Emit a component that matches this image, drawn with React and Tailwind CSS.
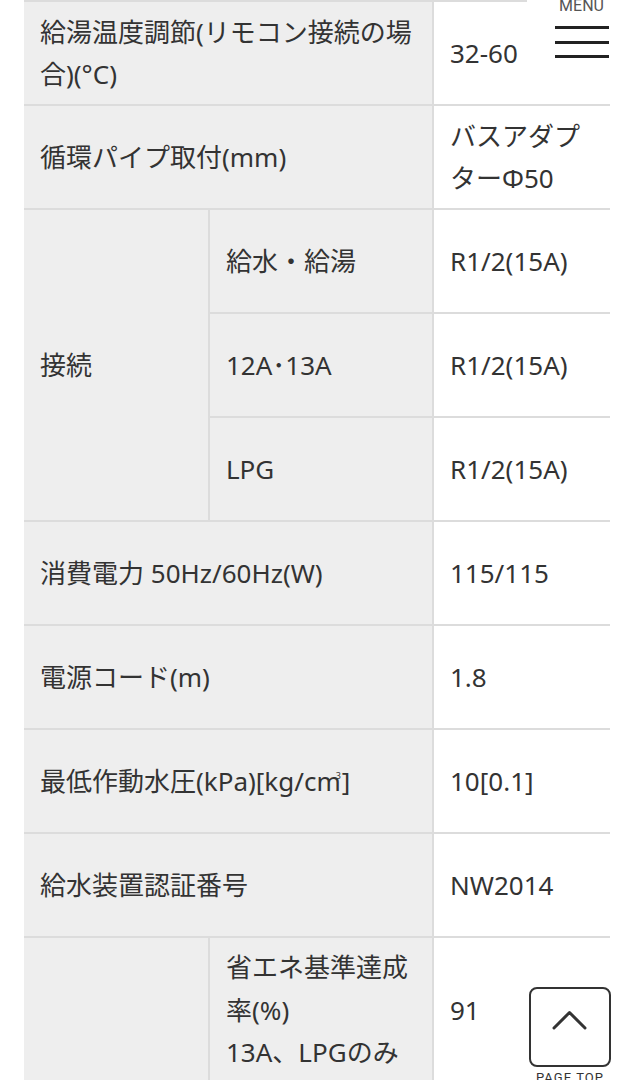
import React from "react";

const label = "bg-[#eeeeee] flex items-center px-4 py-2 min-h-[102px]";
const value = "bg-white flex items-center pl-4 pr-4 py-2 min-h-[102px]";

export default function App() {
  return (
    <div className="relative w-full h-[1080px] overflow-hidden bg-white text-[#333333] font-['Noto_Sans','Noto_Sans_CJK_JP',sans-serif] text-[26px] leading-[42.5px]">
      <div className="ml-[24px] w-[586px] border-t-2 border-[#dcdcdc] bg-[#dcdcdc] grid grid-cols-[184px_222px_176px] gap-[2px]">
        <div className={`${label} col-span-2`}>
          <span>給湯温度調節(リモコン接続の場合)(°C)</span>
        </div>
        <div className={value}>32-60</div>

        <div className={`${label} col-span-2`}>循環パイプ取付(mm)</div>
        <div className={value}>
          <span>バスアダプターΦ50</span>
        </div>

        <div className={`${label} row-span-3`}>接続</div>
        <div className={label}>給水・給湯</div>
        <div className={value}>R1/2(15A)</div>
        <div className={label}>12A･13A</div>
        <div className={value}>R1/2(15A)</div>
        <div className={label}>LPG</div>
        <div className={value}>R1/2(15A)</div>

        <div className={`${label} col-span-2`}>消費電力 50Hz/60Hz(W)</div>
        <div className={value}>115/115</div>

        <div className={`${label} col-span-2`}>電源コード(m)</div>
        <div className={value}>1.8</div>

        <div className={`${label} col-span-2`}>
          <span>
            最低作動水圧(kPa)[kg/cm
            <span className="relative -top-[12px] -ml-[5px] mr-[1px] text-[9px] leading-none">3</span>]
          </span>
        </div>
        <div className={value}>10[0.1]</div>

        <div className={`${label} col-span-2`}>給水装置認証番号</div>
        <div className={value}>NW2014</div>

        <div className={`${label} row-span-2`}></div>
        <div className={label}>
          <span>
            省エネ基準達成率(%)
            <br />
            13A、LPGのみ
          </span>
        </div>
        <div className={value}>91</div>
        <div className={label}></div>
        <div className={value}></div>
      </div>

      <div className="absolute top-0 right-0 w-[109px] h-[68px] bg-white flex flex-col items-center">
        <div className="-mt-[2px] font-['Roboto',sans-serif] text-[16px] leading-none text-[#555555]">MENU</div>
        <div className="mt-[12px] flex flex-col gap-[11.5px]">
          <div className="w-[54px] h-[3px] bg-[#222222]"></div>
          <div className="w-[54px] h-[3px] bg-[#222222]"></div>
          <div className="w-[54px] h-[3px] bg-[#222222]"></div>
        </div>
      </div>

      <div className="absolute left-[529px] top-[987px] w-[82px] flex flex-col items-center">
        <div className="w-[82px] h-[80px] border-2 border-[#333333] rounded-[8px] bg-white">
          <svg width="78" height="76" viewBox="0 0 78 76" fill="none">
            <path d="M23 39 L38.5 23.5 L54 39" stroke="#333333" strokeWidth="3" strokeLinecap="round" strokeLinejoin="round" />
          </svg>
        </div>
        <div className="mt-[4px] font-['Roboto',sans-serif] text-[13px] leading-none tracking-[0.08em] text-[#333333]">PAGE TOP</div>
      </div>
    </div>
  );
}
